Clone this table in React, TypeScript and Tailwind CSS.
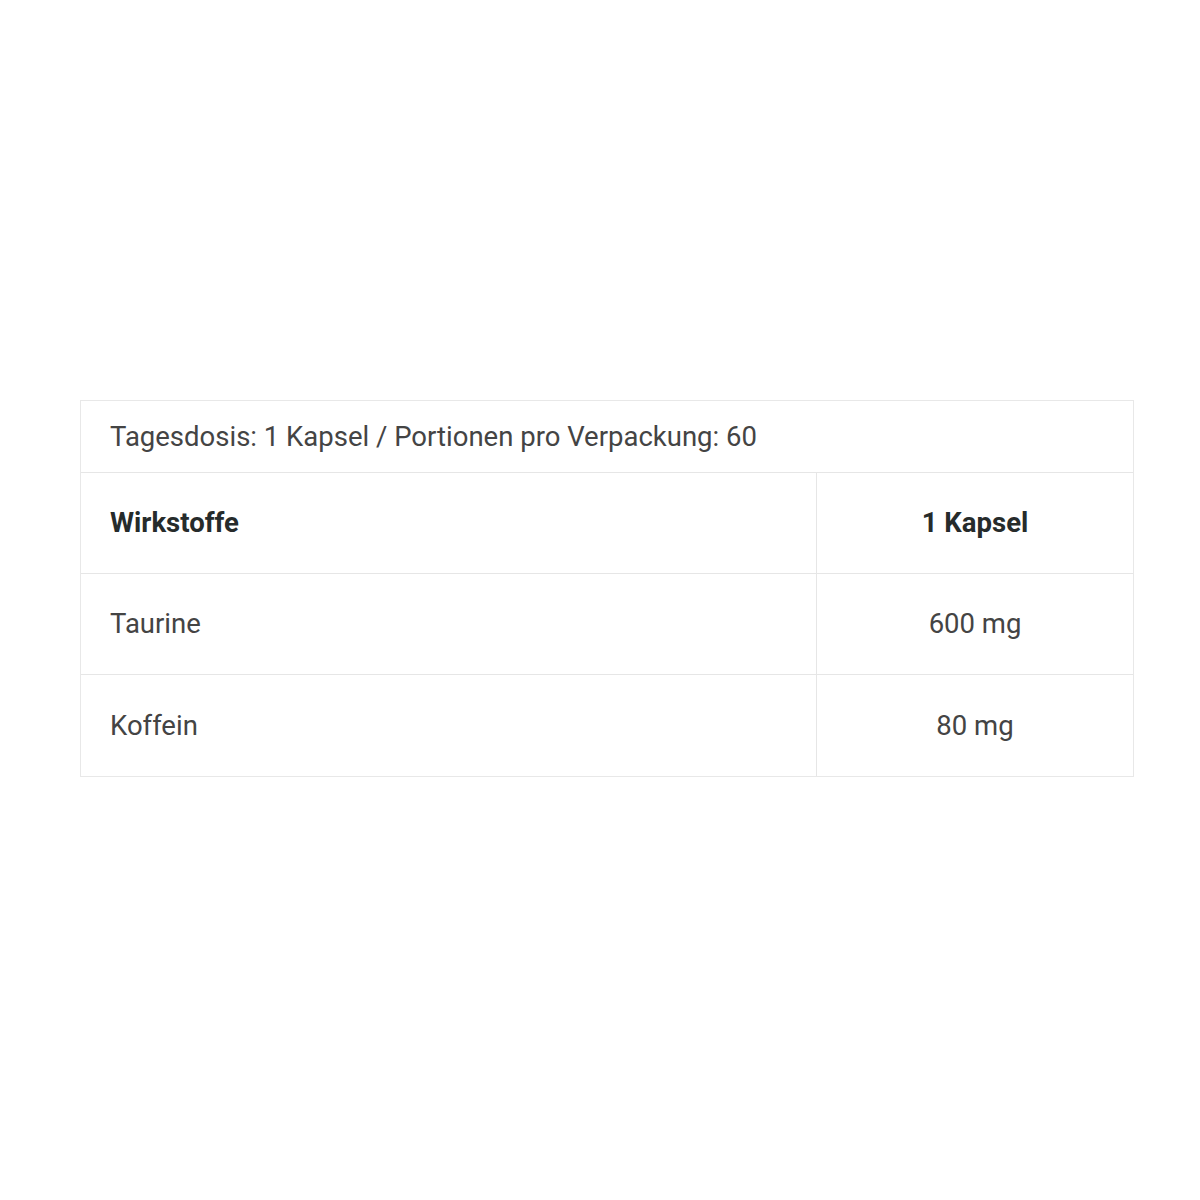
import type React from "react";

interface Row {
	name: string;
	amount: string;
}

const rows: Row[] = [
	{ name: "Taurine", amount: "600 mg" },
	{ name: "Koffein", amount: "80 mg" },
];

const App: React.FC = () => {
	return (
		<div className="w-[1200px] h-[1200px] bg-white font-['Roboto',sans-serif] text-[#444444]">
			<div className="pt-[400px] pl-[80px]">
				<div className="w-[1054px] border border-[#e8e8e8]">
					<div className="h-[72px] flex items-center px-[29px] text-[27.5px] border-b border-[#e6e6e6]">
						Tagesdosis: 1 Kapsel / Portionen pro Verpackung: 60
					</div>
					<div className="grid grid-cols-[736px_1fr]">
						<div className="h-[101px] flex items-center px-[29px] text-[27.5px] font-bold text-[#262b2b] border-r border-b border-[#e6e6e6]">
							Wirkstoffe
						</div>
						<div className="h-[101px] flex items-center justify-center text-[27.5px] font-bold text-[#262b2b] border-b border-[#e6e6e6]">
							1 Kapsel
						</div>
						{rows.map((row, i) => {
							const last = i === rows.length - 1;
							return [
								<div
									key={`${row.name}-n`}
									className={`h-[101px] flex items-center px-[29px] text-[27.5px] border-r border-[#e6e6e6] ${last ? "" : "border-b"}`}
								>
									{row.name}
								</div>,
								<div
									key={`${row.name}-a`}
									className={`h-[101px] flex items-center justify-center text-[27.5px] border-[#e6e6e6] ${last ? "" : "border-b"}`}
								>
									{row.amount}
								</div>,
							];
						})}
					</div>
				</div>
			</div>
		</div>
	);
};

export default App;
